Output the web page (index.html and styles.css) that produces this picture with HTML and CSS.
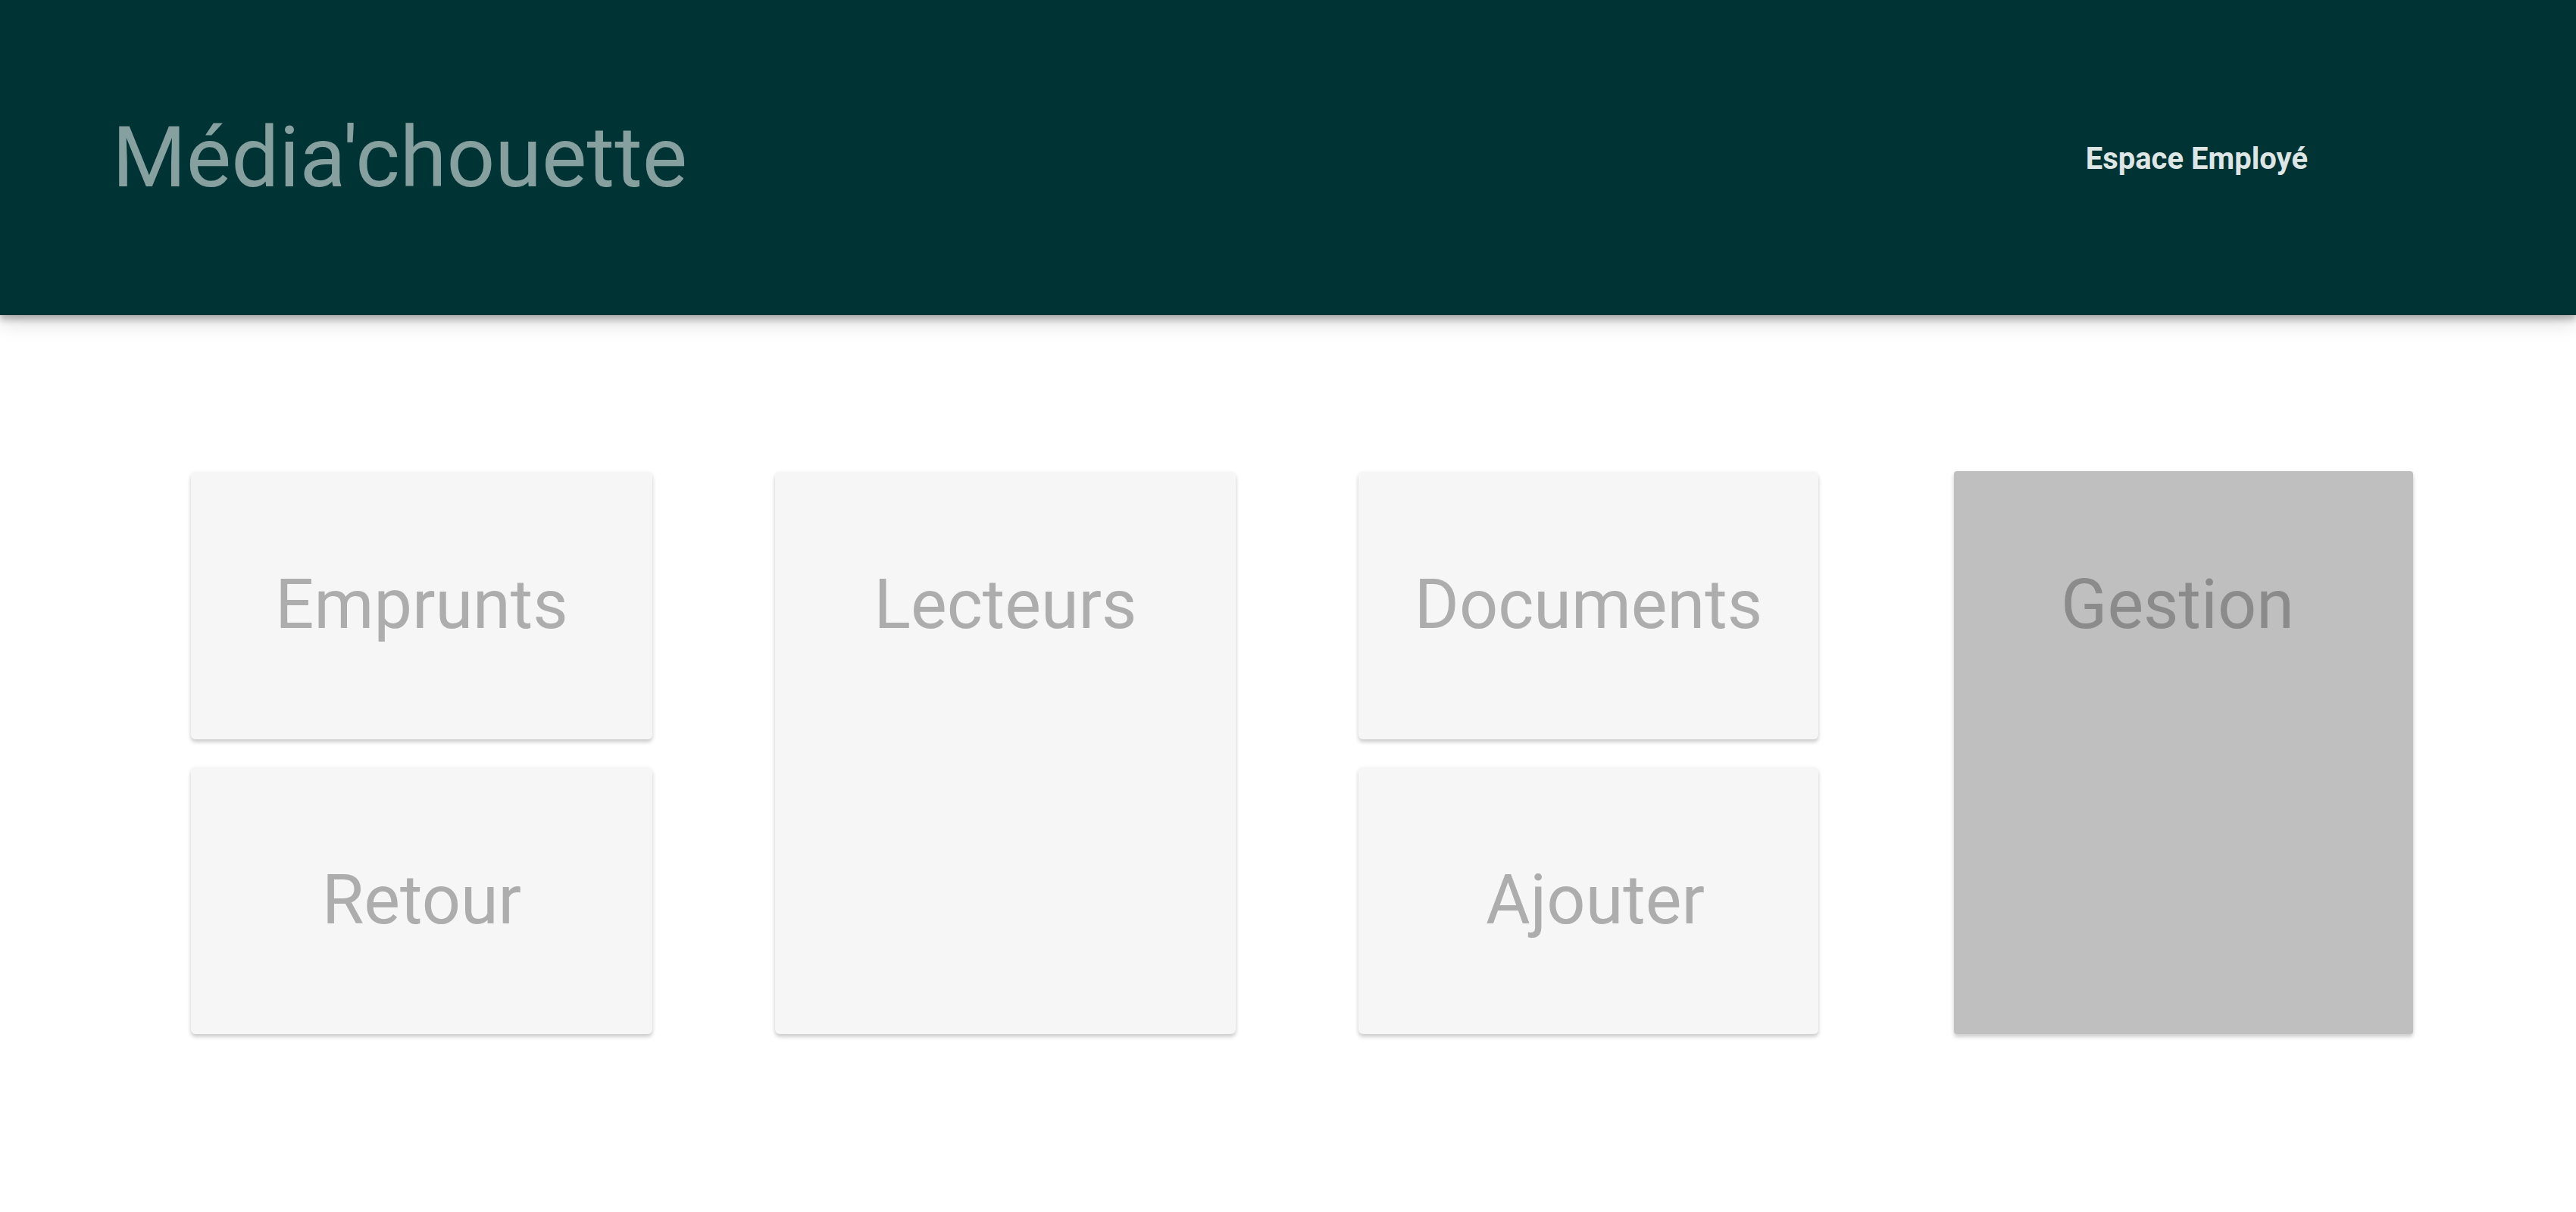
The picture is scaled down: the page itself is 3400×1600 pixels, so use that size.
FILE: index.html
```html
<!DOCTYPE html>
<html lang="fr">
<head>
<meta charset="utf-8">
<title>Média'chouette</title>
<link rel="stylesheet" href="styles.css">
</head>
<body>
<header class="topbar">
  <a class="brand" href="#">Média'chouette</a>
  <nav class="nav">
    <a class="nav-link" href="#">Espace Employé</a>
  </nav>
</header>
<main class="dashboard">
  <div class="tiles">
    <a class="tile tile-emprunts" href="#"><span class="tile-label">Emprunts</span></a>
    <a class="tile tile-lecteurs tile-tall" href="#"><span class="tile-label">Lecteurs</span></a>
    <a class="tile tile-documents" href="#"><span class="tile-label">Documents</span></a>
    <a class="tile tile-gestion tile-tall tile-dark" href="#"><span class="tile-label tile-label-left">Gestion</span></a>
    <a class="tile tile-retour" href="#"><span class="tile-label">Retour</span></a>
    <a class="tile tile-ajouter" href="#"><span class="tile-label tile-label-shift">Ajouter</span></a>
  </div>
</main>
</body>
</html>
```
FILE: styles.css
```css
html, body {
  margin: 0;
  padding: 0;
  background: #ffffff;
  font-family: Roboto, "Noto Sans", "Liberation Sans", sans-serif;
}

a {
  text-decoration: none;
}

.topbar {
  position: relative;
  z-index: 2;
  height: 416px;
  background: #003333;
  box-shadow: 0 6px 8px rgba(0, 0, 0, 0.25), 0 12px 24px rgba(0, 0, 0, 0.12);
  display: flex;
  align-items: center;
  justify-content: space-between;
  padding: 0 354px 0 148px;
}

.brand {
  font-size: 112px;
  font-weight: 400;
  color: #86a0a0;
  line-height: 1;
}

.nav {
  display: flex;
  align-items: center;
}

.nav-link {
  font-size: 40px;
  font-weight: 700;
  color: #dee5e5;
  line-height: 1;
  padding-top: 4px;
}

.dashboard {
  padding: 207px 0 120px 252px;
}

.tiles {
  display: grid;
  grid-template-columns: 609px 608px 607px 623px;
  grid-template-rows: 353px 352px;
  column-gap: 162px;
  row-gap: 37px;
}

.tile {
  display: block;
  background: #f6f6f6;
  border-radius: 6px;
  box-shadow: 0 4px 5px rgba(0, 0, 0, 0.17), 0 1px 6px rgba(0, 0, 0, 0.06);
}

.tile-emprunts { grid-column: 1; grid-row: 1; }
.tile-retour { grid-column: 1; grid-row: 2; }
.tile-lecteurs { grid-column: 2; grid-row: 1 / span 2; }
.tile-documents { grid-column: 3; grid-row: 1; }
.tile-ajouter { grid-column: 3; grid-row: 2; }
.tile-gestion { grid-column: 4; grid-row: 1 / span 2; margin-left: 17px; margin-top: -1px; }

.tile-dark {
  background: #bfbfbf;
  border-radius: 4px;
}

.tile-label {
  display: flex;
  align-items: center;
  justify-content: center;
  height: 352px;
  font-size: 90px;
  font-weight: 400;
  color: #adadad;
  line-height: 1;
}

.tile-label-shift {
  padding-left: 18px;
}

.tile-label-left {
  padding-right: 16px;
}

.tile-dark .tile-label {
  color: #8b8b8b;
  height: 354px;
}
```
